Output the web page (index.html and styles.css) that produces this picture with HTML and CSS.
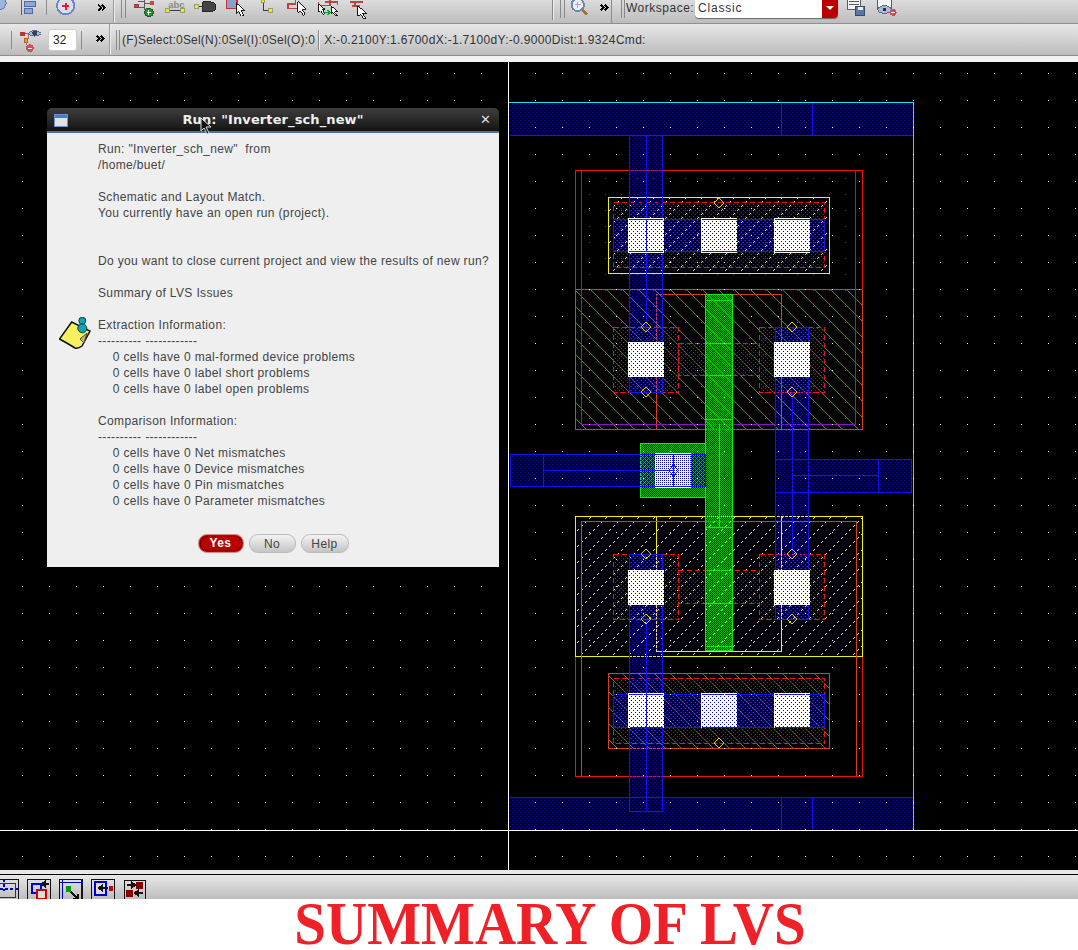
FILE: index.html
```html
<!DOCTYPE html>
<html lang="en">
<head>
    <meta charset="UTF-8">
    <meta name="viewport" content="width=device-width, initial-scale=1.0">
    <title>Summary of LVS</title>
    <link rel="stylesheet" href="styles.css">
</head>
<body>
    <!-- top toolbars -->
    <div class="toolbar toolbar-top">
        <svg class="tools tools-a" viewBox="0 0 113 24">
            <circle cx="-3" cy="3" r="7" fill="#9fb4dc" stroke="#5a74b0"/>
            <path d="M20.5 0V16" stroke="#b33" fill="none"/>
            <rect x="23" y="2" width="12" height="5" fill="#8fa6d8" stroke="#4a64a0"/>
            <rect x="23" y="9" width="8" height="5" fill="#8fa6d8" stroke="#4a64a0"/>
            <path d="M46.5 0V16" stroke="#888"/>
            <circle cx="66" cy="6" r="9" fill="#d8e0f0" stroke="#7088c0" stroke-width="2"/>
            <path d="M66 3V10M62.500 6.500H69.500" stroke="#d22" stroke-width="2"/>
            <path d="M100 5l3 3-3 3M104 5l3 3-3 3" class="chev"/>
        </svg>
        <div class="handle"></div>
        <div class="grip"></div>
        <svg class="tools tools-b" viewBox="0 0 270 24">
            <!-- schematic tools -->
            <rect x="1" y="5" width="4" height="3" fill="#c44" stroke="#933"/>
            <path d="M5 2H11M5 8H11M11 0V10M11 4H17" stroke="#555" fill="none"/>
            <rect x="17" y="1" width="4" height="4" fill="#c44"/>
            <circle cx="16" cy="13" r="4.500" fill="#1a9a2a" stroke="#0a5a1a"/>
            <path d="M16 10.500V15.500M13.500 13H18.500" stroke="#fff"/>
            <text x="36" y="8" class="tool-text">abc</text>
            <path d="M35 11H50" stroke="#333"/>
            <rect x="33" y="9" width="4" height="4" fill="#ee0" stroke="#997"/>
            <rect x="49" y="9" width="4" height="4" fill="#ee0" stroke="#997"/>
            <path d="M67 7H72" stroke="#333"/>
            <rect x="64" y="5" width="4" height="4" fill="#ee0" stroke="#997"/>
            <path d="M72 2H80Q86 2 86 7Q86 12 80 12H72Z" fill="#444" stroke="#222"/>
            <rect x="97" y="-2" width="11" height="11" fill="#88a0d0" stroke="#b33" stroke-width="1.500"/>
            <path d="M107 3V14L110 12L113 17L115 16L112 11L116 11Z" class="arrow"/>
            <path d="M136 1V11H141" stroke="#333" fill="none"/>
            <rect x="133" y="-1" width="4" height="4" fill="#ee0" stroke="#997"/>
            <rect x="141" y="9" width="4" height="4" fill="#ee0" stroke="#997"/>
            <path d="M161 9V4H169V-1M161 9H172" stroke="#b44" fill="none" stroke-width="1.500"/>
            <path d="M171 2V13L174 11L177 16L179 15L176 10L180 10Z" class="arrow"/>
            <path d="M193 2V6H205V0M200 2H213V5" stroke="#b44" fill="none" stroke-width="1.500"/>
            <path d="M193 4V13L195 11L198 15L200 14L197 10L200 10Z" class="arrow"/>
            <path d="M206 6V15L208 13L211 17L213 16L210 12L213 12Z" class="arrow"/>
            <path d="M198 13H204M202 10.500L205 13L202 15.500" stroke="#1a9a2a" fill="none" stroke-width="1.500"/>
            <path d="M226 2H239M228 6H236M231 2V6" stroke="#b44" fill="none" stroke-width="2"/>
            <path d="M234 6V17L237 15L240 20L242 19L239 14L243 14Z" class="arrow"/>
        </svg>
        <div class="spring"></div>
        <div class="sep"></div>
        <div class="grip"></div>
        <svg class="tools tools-c" viewBox="0 0 53 24">
            <circle cx="9" cy="5" r="6.500" fill="#e8eef8" stroke="#7088a8" stroke-width="2"/>
            <path d="M9 2V8M6 5H12" stroke="#c99"/>
            <path d="M14 10L19 15" stroke="#a8702a" stroke-width="3"/>
            <path d="M33 5l3 3-3 3M37 5l3 3-3 3" class="chev"/>
            <path d="M44.500 0V24" stroke="#888"/>
        </svg>
        <div class="grip grip-near"></div>
        <span class="workspace-label">Workspace:</span>
        <div class="workspace-select">
            <span class="workspace-value">Classic</span>
            <span class="workspace-arrow"></span>
        </div>
        <svg class="tools tools-d" viewBox="0 0 60 24">
            <rect x="1" y="-2" width="14" height="12" fill="#f4f4f4" stroke="#555"/>
            <path d="M3 2H13M3 5H13" stroke="#555"/>
            <rect x="10" y="7" width="9" height="9" fill="#5a74b0" stroke="#345"/>
            <rect x="12" y="7" width="5" height="3" fill="#eef"/>
            <rect x="33" y="-2" width="14" height="11" fill="#f4f4f4" stroke="#555"/>
            <ellipse cx="40" cy="10" rx="7" ry="4" fill="#a8bcd8" stroke="#567"/>
            <circle cx="40" cy="10" r="2" fill="#234"/>
            <circle cx="49" cy="13" r="3.500" fill="#cc4f5a"/>
            <path d="M47 13H51" stroke="#fff"/>
        </svg>
    </div>
    <div class="toolbar toolbar-status">
        <svg class="tools tools-e" viewBox="0 0 48 32">
            <path d="M11.500 7V26" stroke="#888"/>
            <rect x="20" y="8" width="5" height="4" fill="#b33"/>
            <rect x="24" y="15" width="4" height="4" fill="#e8a040" stroke="#a60"/>
            <path d="M25 10H29V15M27 19V22" stroke="#a66" fill="none"/>
            <path d="M28 10Q35 3 42 10Q35 15 28 10Z" fill="#a8bcd8" stroke="#5a6a88"/>
            <circle cx="35" cy="9.500" r="2.500" fill="#345"/>
            <circle cx="30" cy="25" r="4" fill="#cc4f5a"/>
            <path d="M28 25H32" stroke="#fff"/>
        </svg>
        <input class="zoom-input" type="text" value="32">
        <svg class="tools tools-f" viewBox="0 0 32 32">
            <path d="M4.500 7V26" stroke="#888"/>
            <path d="M20 12l3 3-3 3M24 12l3 3-3 3" class="chev"/>
        </svg>
        <div class="handle"></div>
        <div class="grip grip-tall"></div>
        <span class="status-text">(F)Select:0 Sel(N):0 Sel(I):0 Sel(O):0</span>
        <div class="sep sep-status"></div>
        <span class="status-text status-coords">X:-0.2100 Y:1.6700 dX:-1.7100 dY:-0.9000 Dist:1.9324 Cmd:</span>
    </div>
    <div class="strip"></div>

    <!-- layout canvas, coordinates in the viewBox are page pixels -->
    <div class="canvas">
        <svg class="layout" viewBox="0 62 1078 808">
            <defs>
                <pattern id="grid" width="27" height="27" x="508" y="100" patternUnits="userSpaceOnUse">
                    <rect width="1" height="1" x="0" y="0" fill="#fff"/>
                </pattern>
                <pattern id="metal" width="4" height="4" patternUnits="userSpaceOnUse">
                    <rect width="1" height="1" x="0" y="0" fill="#0c0cb0"/>
                    <rect width="1" height="1" x="2" y="2" fill="#0c0cb0"/>
                </pattern>
                <pattern id="cont" width="4" height="4" patternUnits="userSpaceOnUse">
                    <rect width="1" height="1" x="1" y="1" fill="#0000d8"/>
                    <rect width="1" height="1" x="3" y="3" fill="#0000d8"/>
                </pattern>
                <pattern id="active" width="4" height="4" patternUnits="userSpaceOnUse">
                    <rect width="1" height="1" x="1" y="0" fill="#c01414"/>
                    <rect width="1" height="1" x="3" y="2" fill="#c01414"/>
                </pattern>
                <pattern id="poly" width="2" height="2" patternUnits="userSpaceOnUse">
                    <rect width="1" height="1" x="0" y="0" fill="#12b812"/>
                    <rect width="1" height="1" x="1" y="1" fill="#12b812"/>
                </pattern>
                <pattern id="well" width="16" height="16" x="581" y="174" patternUnits="userSpaceOnUse">
                    <rect width="1" height="1" x="8" y="4" fill="#8a14c8"/>
                </pattern>
                <pattern id="hatch-red" width="16" height="16" x="575" y="290" patternUnits="userSpaceOnUse">
                    <path d="M0 0h1v1h-1zm1 1h1v1h-1zm1 1h1v1h-1zm1 1h1v1h-1zm1 1h1v1h-1zm1 1h1v1h-1zm1 1h1v1h-1zm1 1h1v1h-1zm1 1h1v1h-1zm1 1h1v1h-1zm1 1h1v1h-1zm1 1h1v1h-1zm1 1h1v1h-1zm1 1h1v1h-1zm1 1h1v1h-1zm1 1h1v1h-1z" fill="#d8401c"/>
                </pattern>
                <pattern id="hatch-yellow" width="16" height="16" x="575" y="517" patternUnits="userSpaceOnUse">
                    <path d="M15 0h1v1h-1zm-1 1h1v1h-1zm-3 3h1v1h-1zm-1 1h1v1h-1zm-3 3h1v1h-1zm-1 1h1v1h-1zm-3 3h1v1h-1zm-1 1h1v1h-1z" fill="#f0f000"/>
                </pattern>
                <g id="contact">
                    <rect x="0" y="0" width="36" height="35" class="cut"/>
                    <rect x="0" y="0" width="36" height="35" fill="url(#cont)"/>
                </g>
                <polygon id="pin" points="0,-5 5,0 0,5 -5,0" class="pin"/>
            </defs>

            <!-- cross hair and cell boundary -->
            <path d="M508.500 62V870M0 830.500H1078" class="line-white"/>
            <path d="M509 102.500H913.500V830" class="line-cyan"/>

            <!-- power rails -->
            <rect x="510" y="103" width="403" height="32" fill="url(#metal)"/>
            <path d="M510 135.500H913M781.500 103V135M812.500 103V135" class="line-blue"/>
            <rect x="510" y="797" width="403" height="33" fill="url(#metal)"/>
            <path d="M510 797.500H913M781.500 797V830M812.500 797V830" class="line-blue"/>

            <!-- wells and implants -->
            <rect x="581" y="171" width="275" height="253" fill="url(#well)"/>
            <rect x="575.500" y="289.500" width="287" height="140" fill="url(#hatch-red)" class="line-brown"/>
            <path d="M656.500 429V294.500H781.500V429" class="line-brown"/>
            <rect x="581.500" y="170.500" width="274" height="254" fill="none" class="line-purple"/>
            <path d="M575.500 290V170.500H862.500V290" class="line-red"/>
            <rect x="575.500" y="516.500" width="287" height="140" fill="url(#hatch-yellow)" class="line-yellow"/>
            <path d="M656.500 517V651.500H781.500V517" class="line-yellow"/>
            <path d="M581.500 776V521.500H856.500V776" class="line-brown"/>
            <path d="M575.500 657V776.500H862.500V657" class="line-red"/>

            <!-- top and bottom diffusion -->
            <rect x="608.500" y="197.500" width="221" height="76" fill="url(#hatch-yellow)" class="line-yellow"/>
            <rect x="613.500" y="202.500" width="211" height="65" fill="url(#active)" class="line-dash"/>
            <rect x="608.500" y="673.500" width="221" height="75" fill="url(#hatch-red)" class="line-brown"/>
            <rect x="613.500" y="678.500" width="211" height="65" fill="url(#active)" class="line-dash"/>

            <!-- source and drain -->
            <rect x="613.500" y="327.500" width="65" height="65" fill="url(#active)" class="line-dash"/>
            <rect x="759.500" y="327.500" width="65" height="65" fill="url(#active)" class="line-dash"/>
            <rect x="678.500" y="343.500" width="81" height="32" fill="url(#active)" class="line-dash"/>
            <rect x="613.500" y="554.500" width="65" height="65" fill="url(#active)" class="line-dash"/>
            <rect x="759.500" y="554.500" width="65" height="65" fill="url(#active)" class="line-dash"/>
            <rect x="678.500" y="570.500" width="81" height="33" fill="url(#active)" class="line-dash"/>

            <!-- metal -->
            <rect x="629.500" y="135.500" width="33" height="257" fill="url(#metal)" class="line-blue"/>
            <path d="M646.500 135V327" class="line-blue"/>
            <rect x="629.500" y="554.500" width="33" height="257" fill="url(#metal)" class="line-blue"/>
            <path d="M646.500 619V811" class="line-blue"/>
            <rect x="775.500" y="327.500" width="33" height="292" fill="url(#metal)" class="line-blue"/>
            <path d="M792.500 392V554" class="line-blue"/>
            <rect x="775.500" y="459.500" width="136" height="33" fill="url(#metal)" class="line-blue"/>
            <path d="M792 475.500H878.500M878.500 459V492" class="line-blue"/>
            <rect x="613.500" y="219.500" width="211" height="32" fill="url(#metal)" class="line-blue"/>
            <rect x="613.500" y="694.500" width="211" height="33" fill="url(#metal)" class="line-blue"/>

            <!-- gate -->
            <rect x="640.500" y="443.500" width="65" height="54" fill="url(#poly)" class="line-green"/>
            <rect x="705.500" y="294.500" width="27" height="356" fill="url(#poly)" class="line-green"/>
            <path d="M705 300.500H733M705 343.500H733M705 375.500H733M705 419.500H733M705 527.500H733M705 570.500H733M705 603.500H733M705 646.500H733M719.500 424V527" class="line-green"/>
            <rect x="706" y="295" width="26" height="135" fill="url(#hatch-red)"/>
            <rect x="706" y="517" width="26" height="133" fill="url(#hatch-yellow)"/>

            <!-- contact cuts -->
            <use href="#contact" x="628" y="218"/>
            <use href="#contact" x="701" y="218"/>
            <use href="#contact" x="774" y="218"/>
            <use href="#contact" x="628" y="342"/>
            <use href="#contact" x="774" y="342"/>
            <use href="#contact" x="655" y="453"/>
            <use href="#contact" x="628" y="570"/>
            <use href="#contact" x="774" y="570"/>
            <use href="#contact" x="628" y="693"/>
            <use href="#contact" x="701" y="693"/>
            <use href="#contact" x="774" y="693"/>

            <!-- input pin -->
            <rect x="510.500" y="454.500" width="195" height="32" fill="url(#metal)" class="line-blue"/>
            <path d="M543.500 454V487M544 470.500H673M673.500 454V487" class="line-blue"/>
            <polygon points="673.500,465 678.500,470.500 673.500,476 668.500,470.500" fill="none" class="line-blue"/>
            <path d="M629.500 219.500H662.500M629.500 251.500H662.500M629.500 694.500H662.500M629.500 727.500H662.500M702 219.500H737M702 251.500H737M702 694.500H737M702 727.500H737M775 219.500H810M775 251.500H810M775 694.500H810M775 727.500H810M646.500 219V252M646.500 693V728" class="line-blue"/>

            <!-- pins -->
            <use href="#pin" x="719" y="203"/>
            <use href="#pin" x="646" y="327"/>
            <use href="#pin" x="792" y="327"/>
            <use href="#pin" x="646" y="392"/>
            <use href="#pin" x="792" y="392"/>
            <use href="#pin" x="646" y="554"/>
            <use href="#pin" x="792" y="554"/>
            <use href="#pin" x="646" y="619"/>
            <use href="#pin" x="792" y="619"/>
            <use href="#pin" x="719" y="743"/>

            <rect x="0" y="62" width="1078" height="808" fill="url(#grid)"/>
        </svg>

        <!-- LVS result dialog -->
        <div class="dialog">
            <div class="dialog-title">
                <svg class="window-icon" viewBox="0 0 14 13">
                    <rect x="0.500" y="0.500" width="13" height="12" fill="#dde3e6" stroke="#6d93c8"/>
                    <rect x="1" y="1" width="12" height="3" fill="#4a7ac0"/>
                </svg>
                <span class="dialog-name">Run: "Inverter_sch_new"</span>
                <span class="dialog-close">&#x2715;</span>
            </div>
            <div class="dialog-body">
                <svg class="note-icon" viewBox="0 0 32 34">
                    <path d="M0.500 22L12.700 5L31 14L23 29Q19 32 16 31Q8 26 0.500 22Z" fill="#f6f060" stroke="#111" stroke-width="1.500"/>
                    <path d="M21 22L28 16L25 26Z" fill="#c8b860" stroke="#444"/>
                    <circle cx="23.300" cy="3.700" r="3.500" fill="#18a0b0" stroke="#044"/>
                    <circle cx="23.300" cy="11.300" r="4.500" fill="#18a0b0" stroke="#044"/>
                    <path d="M21 6H25.500V8H21Z" fill="#0a6a78"/>
                </svg>
                <pre class="dialog-text">Run: "Inverter_sch_new"  from
/home/buet/

Schematic and Layout Match.
You currently have an open run (project).


Do you want to close current project and view the results of new run?

Summary of LVS Issues

Extraction Information:
---------- ------------
    0 cells have 0 mal-formed device problems
    0 cells have 0 label short problems
    0 cells have 0 label open problems

Comparison Information:
---------- ------------
    0 cells have 0 Net mismatches
    0 cells have 0 Device mismatches
    0 cells have 0 Pin mismatches
    0 cells have 0 Parameter mismatches</pre>
                <div class="dialog-buttons">
                    <button class="btn btn-yes"><span class="btn-focus">Yes</span></button>
                    <button class="btn btn-no">No</button>
                    <button class="btn">Help</button>
                </div>
            </div>
            <svg class="mouse-cursor" viewBox="0 0 12 18">
                <path d="M1 1V14L4 11L7 17L9 16L6 10L11 10Z" fill="#111" stroke="#ddd"/>
            </svg>
        </div>
    </div>

    <div class="strip strip-low"></div>
    <div class="toolbar toolbar-bottom">
        <svg class="tools tools-g" viewBox="0 0 150 24">
            <g transform="translate(0 4)">
                <rect x="-5" y="0.500" width="23" height="30" class="box"/>
                <path d="M4 0V12M0 9.500H18" stroke="#00c" stroke-width="2" stroke-dasharray="3 2" fill="none"/>
                <rect x="-4" y="4.500" width="19" height="14" fill="none" stroke="#333"/>
                <rect x="27.500" y="0.500" width="23" height="30" class="box"/>
                <rect x="32" y="5" width="9" height="9" fill="none" stroke="#00c" stroke-width="2"/>
                <rect x="37" y="11" width="9" height="9" fill="#ddd" stroke="#c00" stroke-width="2"/>
                <path d="M49 5H43M46 2L42 5L46 8" stroke="#111" stroke-width="2" fill="none"/>
                <rect x="59.500" y="0.500" width="23" height="30" class="box"/>
                <path d="M62.500 0V24M59 3.500H83M81.500 0V24" stroke="#00c" fill="none"/>
                <rect x="66" y="7" width="5" height="6" fill="#090"/>
                <path d="M71 13L78 20M78 15V20H73" stroke="#111" stroke-width="2" fill="none"/>
                <rect x="91.500" y="0.500" width="23" height="30" class="box"/>
                <rect x="95" y="3" width="11" height="13" fill="#ddd" stroke="#00c" stroke-width="2"/>
                <path d="M108 9H100M103 6L99 9L103 12" stroke="#111" stroke-width="2" fill="none"/>
                <rect x="109" y="7" width="4" height="5" fill="#c00"/>
                <rect x="124.500" y="1.500" width="21" height="30" class="box"/>
                <rect x="136" y="3" width="7" height="7" fill="#800"/>
                <rect x="126" y="11" width="7" height="7" fill="#800"/>
                <path d="M127 6H134M131 3L135 6L131 9M143 14H136M139 11L135 14L139 17" stroke="#111" stroke-width="2" fill="none"/>
            </g>
        </svg>
    </div>
    <h1 class="caption">SUMMARY OF LVS</h1>
</body>
</html>
```

FILE: styles.css
```css
html, body {
    margin: 0;
    height: 950px;
    overflow: hidden;
    background-color: #fff;
    font-family: "Liberation Sans", Arial, sans-serif;
}
body {
    display: flex;
    flex-direction: column;
}
.toolbar {
    display: flex;
    align-items: center;
    flex-shrink: 0;
    box-sizing: border-box;
    overflow: hidden;
    color: #333;
}
.toolbar-top {
    height: 24px;
    background: linear-gradient(#dcdcdc, #bdbdbd);
    border-bottom: 1px solid #8f8f8f;
}
.toolbar-status {
    height: 32px;
    background: linear-gradient(#e8e8e8, #bcbcbc);
    border-bottom: 1px solid #8f8f8f;
}
.toolbar-bottom {
    height: 24px;
    background: linear-gradient(#e8e8e8, #bdbdbd);
}
.strip {
    height: 6px;
    flex-shrink: 0;
    background-color: #f2f2f2;
}
.strip-low {
    height: 5px;
    background-color: #e8e8e8;
    border-bottom: 1px solid #000;
    box-sizing: border-box;
}
.tools {
    flex-shrink: 0;
    height: 100%;
    overflow: hidden;
    shape-rendering: crispEdges;
}
.tools-a { width: 113px; }
.tools-b { width: 270px; }
.tools-c { width: 53px; margin-left: 1px; }
.tools-d { width: 60px; margin-left: 7px; }
.tools-e { width: 48px; }
.tools-f { width: 32px; }
.tools-g { width: 150px; }
.chev {
    fill: none;
    stroke: #000;
    stroke-width: 2;
}
.arrow {
    fill: #fff;
    stroke: #111;
}
.tool-text {
    font-family: "Liberation Sans", sans-serif;
    font-size: 10px;
    font-weight: bold;
    fill: #8a8a8a;
}
.box {
    fill: none;
    stroke: #111;
}
.handle {
    flex-shrink: 0;
    width: 1px;
    height: 100%;
    background-color: #999;
    border-right: 1px solid #eee;
}
.grip {
    flex-shrink: 0;
    width: 3px;
    height: 18px;
    margin: 0 2px 5px 6px;
    border-left: 1px solid #888;
    border-right: 1px solid #888;
}
.grip-near {
    width: 2px;
    margin: 0 1px 5px 0;
}
.grip-tall {
    width: 2px;
    height: 20px;
    margin: 0 2px 0 5px;
}
.sep {
    flex-shrink: 0;
    width: 1px;
    height: 20px;
    margin-bottom: 4px;
    background-color: #888;
    border-right: 1px solid #eee;
}
.sep-status {
    margin: 0 4px 0 3px;
}
.spring {
    width: 154px;
    flex-shrink: 0;
}
.workspace-label {
    width: 69px;
    margin-bottom: 7px;
    font-size: 12px;
    letter-spacing: 0.5px;
    flex-shrink: 0;
}
.workspace-select {
    display: flex;
    flex-shrink: 0;
    width: 143px;
    height: 18px;
    margin-bottom: 6px;
    background-color: #fff;
    border-radius: 0 0 4px 4px;
    box-shadow: 0 1px 1px #666;
    overflow: hidden;
}
.workspace-value {
    flex: 1;
    padding-left: 3px;
    font-size: 12px;
    line-height: 16px;
    letter-spacing: 0.8px;
}
.workspace-arrow {
    position: relative;
    width: 16px;
    background-color: #b80000;
}
.workspace-arrow::after {
    content: "";
    position: absolute;
    left: 4px;
    top: 6px;
    border-top: 4px solid #fff;
    border-left: 4px solid transparent;
    border-right: 4px solid transparent;
}
.zoom-input {
    box-sizing: border-box;
    flex-shrink: 0;
    width: 29px;
    height: 22px;
    padding: 0 0 0 4px;
    border: 1px solid #ccc;
    border-radius: 3px;
    font-family: "Liberation Sans", Arial, sans-serif;
    font-size: 12px;
    color: #222;
    background-color: #fff;
}
.status-text {
    flex-shrink: 0;
    font-size: 12px;
    letter-spacing: 0.2px;
    word-spacing: -3.5px;
    white-space: nowrap;
}
.status-coords {
    letter-spacing: 0.3px;
}
.canvas {
    position: relative;
    height: 808px;
    flex-shrink: 0;
    background-color: #000;
}
.layout {
    display: block;
    width: 1078px;
    height: 808px;
    shape-rendering: crispEdges;
}
.line-white { stroke: #fff; fill: none; }
.line-cyan { stroke: #18e8f0; fill: none; }
.line-blue { stroke: #1414f0; }
path.line-blue { fill: none; }
.line-purple { stroke: #8a14c8; }
.line-brown { stroke: #d8401c; }
path.line-brown { fill: none; }
.line-red { stroke: #e81414; fill: none; }
.line-yellow { stroke: #f0f000; }
path.line-yellow { fill: none; }
.line-green { stroke: #14e814; }
path.line-green { fill: none; }
.line-dash {
    stroke: #f01414;
    stroke-dasharray: 5 3;
}
.cut { fill: #fff; }
.pin {
    fill: none;
    stroke: #e8d000;
}
.dialog {
    position: absolute;
    left: 47px;
    top: 46px;
    width: 452px;
    height: 459px;
    display: flex;
    flex-direction: column;
    border-radius: 5px 5px 0 0;
    overflow: hidden;
}
.dialog-title {
    position: relative;
    display: flex;
    align-items: center;
    justify-content: center;
    flex-shrink: 0;
    box-sizing: border-box;
    height: 25px;
    background: linear-gradient(#3e3e3e, #141414);
    border-bottom: 2px solid #4d6f9f;
    color: #eee;
}
.window-icon {
    position: absolute;
    left: 7px;
    top: 6px;
    width: 14px;
    height: 13px;
}
.dialog-name {
    font-family: "DejaVu Sans", sans-serif;
    font-size: 13px;
    font-weight: bold;
    letter-spacing: 0.1px;
}
.dialog-close {
    position: absolute;
    right: 8px;
    top: 4px;
    font-family: "DejaVu Sans", sans-serif;
    font-size: 13px;
    font-weight: bold;
    color: #ddd;
}
.dialog-body {
    position: relative;
    flex: 1;
    background-color: #efefef;
    padding: 8px 0 0 51px;
}
.note-icon {
    position: absolute;
    left: 12px;
    top: 184px;
    width: 32px;
    height: 34px;
}
.dialog-text {
    margin: 0;
    font-family: "Liberation Sans", Arial, sans-serif;
    font-size: 12px;
    line-height: 16px;
    letter-spacing: 0.35px;
    color: #444;
}
.dialog-buttons {
    display: flex;
    justify-content: center;
    gap: 5px;
    margin: 25px 0 0 -51px;
}
.btn {
    box-sizing: border-box;
    width: 48px;
    height: 19px;
    padding: 0;
    border: 1px solid #bbb;
    border-radius: 9px;
    background: linear-gradient(#f4f4f4, #c4c4c4);
    font-family: "Liberation Sans", Arial, sans-serif;
    font-size: 12px;
    letter-spacing: 0.4px;
    color: #444;
}
.btn-no {
    width: 47px;
}
.btn-yes {
    width: 46px;
    border-color: #d88;
    background: #b80000;
    color: #fff;
    font-weight: bold;
}
.btn-focus {
    display: block;
    margin: 1px;
    line-height: 13px;
    border: 1px dotted #000;
    border-radius: 7px;
}
.mouse-cursor {
    position: absolute;
    left: 153px;
    top: 9px;
    width: 12px;
    height: 18px;
}
.caption {
    margin: 0;
    padding-left: 24px;
    height: 49px;
    text-align: center;
    font-family: "Liberation Serif", serif;
    font-size: 62px;
    line-height: 49px;
    font-weight: bold;
    color: #ee2028;
    transform: scaleX(0.92);
}
```
